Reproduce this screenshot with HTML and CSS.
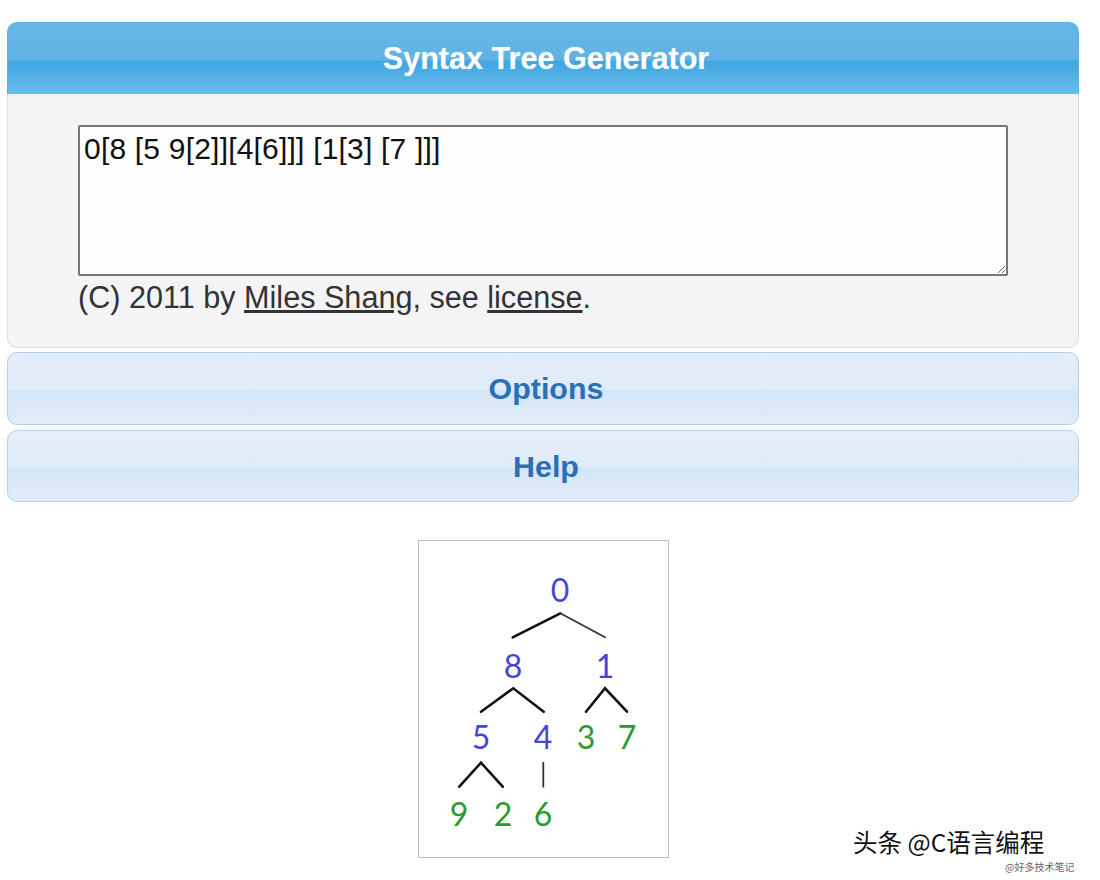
FILE: index.html
```html
<!DOCTYPE html>
<html>
<head>
<meta charset="utf-8">
<link rel="stylesheet" href="styles.css">
</head>
<body>
<div class="page">
  <div class="panel">
    <div class="panel-head">Syntax Tree Generator</div>
    <div class="panel-body">
      <textarea class="code" spellcheck="false">0[8 [5 9[2]][4[6]]] [1[3] [7 ]]]</textarea>
      <div class="credit">(C) 2011 by <a href="#">Miles Shang</a>, see <a href="#">license</a>.</div>
    </div>
  </div>
  <div class="bar">Options</div>
  <div class="bar">Help</div>
  <div class="tree-wrap">
    <div class="tree-box">
      <svg class="tree" width="251" height="318" viewBox="0 0 251 318">
        <g class="edges">
          <path d="M94.7 97.3 L142.3 73.3"/>
          <path class="thin" d="M142.3 73.3 L187 97.3"/>
          <path d="M63 171.7 L95.3 148.3 L125.7 171.7"/>
          <path d="M168 171.7 L187 148.3 L209 171.7"/>
          <path d="M41.3 246.7 L63 222.7 L84.7 246.7"/>
          <path class="thin" d="M125.3 222.7 L125.3 246.7"/>
        </g>
        <g class="nodes">
          <text x="142" y="62">0</text>
          <text x="95" y="138">8</text>
          <text x="187" y="138">1</text>
          <text x="63" y="209">5</text>
          <text x="125" y="209">4</text>
          <text class="leaf" x="168" y="209">3</text>
          <text class="leaf" x="209" y="209">7</text>
          <text class="leaf" x="41" y="286">9</text>
          <text class="leaf" x="85" y="286">2</text>
          <text class="leaf" x="125" y="286">6</text>
        </g>
      </svg>
    </div>
  </div>
</div>
<div class="watermark">头条 @C语言编程<span class="wm-sub">@好多技术笔记</span></div>
</body>
</html>
```

FILE: styles.css
```css
html, body {
  margin: 0;
  padding: 0;
  background: #ffffff;
}
body {
  width: 1100px;
  height: 880px;
  overflow: hidden;
  position: relative;
  font-family: "Liberation Sans", Arial, sans-serif;
}
.page {
  padding: 22px 21px 0 7px;
  display: flex;
  flex-direction: column;
}
.panel {
  display: flex;
  flex-direction: column;
}
.panel-head {
  height: 72px;
  box-sizing: border-box;
  border: 1px solid #5aaee0;
  border-bottom: none;
  border-radius: 10px 10px 0 0;
  background: linear-gradient(to bottom, #66b7e7 0%, #5fb3e5 52%, #3ea6e1 54%, #52b0e4 75%, #6dbde9 100%);
  color: #ffffff;
  font-weight: bold;
  font-size: 30.6px;
  line-height: 71px;
  text-align: center;
  padding-left: 6px;
  text-shadow: 0 0 1px rgba(255,255,255,0.4);
}
.panel-body {
  background: #f4f4f6;
  border: 1px solid #dcdde2;
  border-top: none;
  border-radius: 0 0 10px 10px;
  padding: 31px 70px 0 70px;
  height: 254px;
  box-sizing: border-box;
  display: flex;
  flex-direction: column;
}
.code {
  width: 930px;
  height: 151px;
  box-sizing: border-box;
  border: 2px solid #777777;
  border-radius: 2px;
  background: #fefefe;
  padding: 5px 4px 3px 4px;
  margin: 0;
  font-family: "Liberation Sans", Arial, sans-serif;
  font-size: 30px;
  letter-spacing: 0.2px;
  line-height: 34px;
  color: #111111;
  resize: vertical;
  outline: none;
}
.credit {
  margin-top: 3px;
  font-size: 30.6px;
  line-height: 36px;
  color: #333333;
}
.credit a {
  color: #333333;
  text-decoration: underline;
}
.bar {
  margin-top: 4px;
  height: 73px;
  box-sizing: border-box;
  border: 1px solid #b3cfe9;
  border-radius: 10px;
  background: linear-gradient(to bottom, #e4eef9 0%, #e0ebf8 50%, #d3e5f6 53%, #dae9f7 75%, #e1edf9 100%);
  color: #2a70b8;
  font-weight: bold;
  font-size: 30.4px;
  line-height: 71px;
  text-align: center;
  padding-left: 6px;
}
.bar + .bar {
  margin-top: 5px;
  height: 72px;
  line-height: 70px;
}
.tree-wrap {
  display: flex;
  justify-content: center;
  margin-top: 38px;
}
.tree-box {
  width: 251px;
  height: 318px;
  box-sizing: border-box;
  border: 1px solid #bdbdbd;
  background: #ffffff;
  position: relative;
}
.tree {
  display: block;
  margin: -1px;
}
.edges path {
  fill: none;
  stroke: #111111;
  stroke-width: 2.6;
  stroke-linecap: round;
  stroke-linejoin: miter;
}
.edges path.thin {
  stroke: #333333;
  stroke-width: 1.8;
}
.nodes text {
  font-family: Lato, "Open Sans", sans-serif;
  font-size: 32px;
  text-anchor: middle;
  fill: #4646d6;
}
.nodes text.leaf {
  fill: #2c9a2c;
}
.watermark {
  position: absolute;
  left: 853px;
  top: 828px;
  font-family: "Noto Sans CJK SC", sans-serif;
  font-size: 24.5px;
  line-height: 28px;
  color: #111111;
  text-shadow: 1px 1px 0 #ffffff, -1px -1px 0 #ffffff, 1px -1px 0 #ffffff, -1px 1px 0 #ffffff;
  white-space: nowrap;
}
.wm-sub {
  position: absolute;
  left: 152px;
  top: 33px;
  font-size: 10px;
  line-height: 12px;
  color: #666666;
  text-shadow: none;
}
```
